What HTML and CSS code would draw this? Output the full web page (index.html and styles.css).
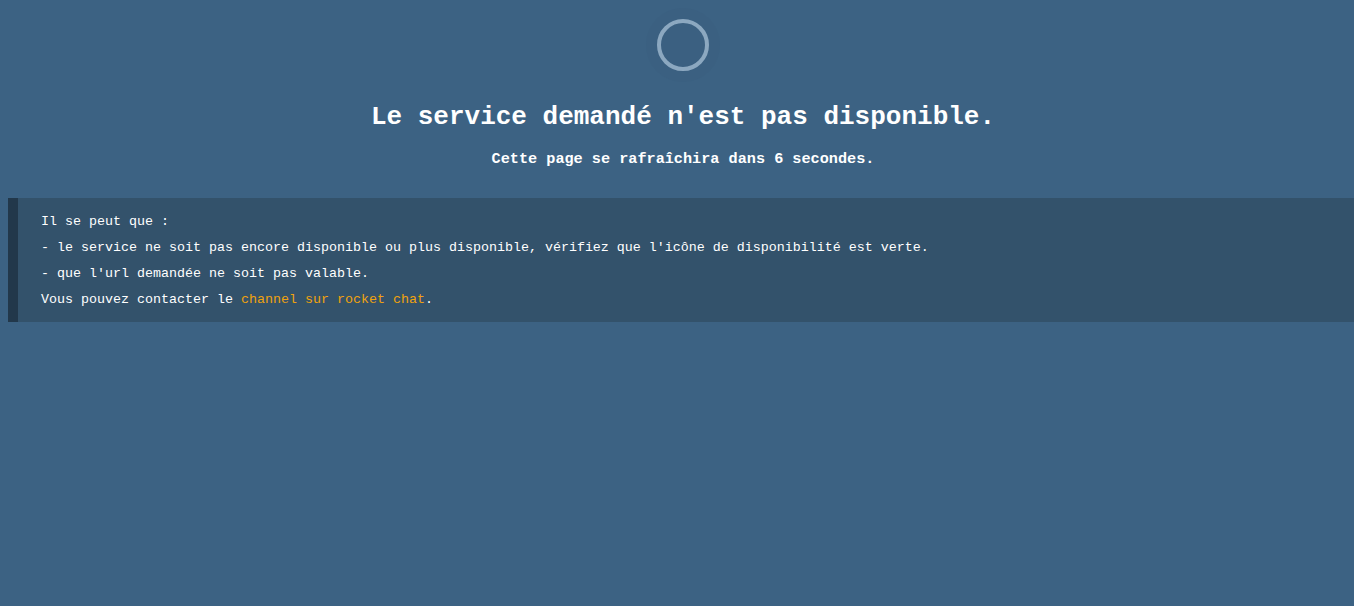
FILE: index.html
```html
<!DOCTYPE html>
<html lang="fr">
<head>
<meta charset="utf-8">
<title>Service indisponible</title>
<link rel="stylesheet" href="styles.css">
</head>
<body>
<header class="header">
  <div class="spinner-wrap"><div class="spinner"></div></div>
  <h1 class="title">Le service demandé n'est pas disponible.</h1>
  <p class="subtitle">Cette page se rafraîchira dans 6 secondes.</p>
</header>
<div class="info">
  <p class="line">Il se peut que :</p>
  <p class="line">- le service ne soit pas encore disponible ou plus disponible, vérifiez que l'icône de disponibilité est verte.</p>
  <p class="line">- que l'url demandée ne soit pas valable.</p>
  <p class="line">Vous pouvez contacter le <a class="link" href="#">channel sur rocket chat</a>.</p>
</div>
</body>
</html>
```
FILE: styles.css
```css
html, body {
  margin: 0;
  padding: 0;
  background: #3c6283;
  color: #ffffff;
  font-family: "Liberation Mono", "Courier New", monospace;
}
body {
  padding-top: 8px;
  overflow-x: hidden;
}
.header {
  padding-left: 12px;
}
.spinner-wrap {
  width: 74px;
  height: 74px;
  margin: 0 auto;
  border-radius: 50%;
  background: #3b6081;
  display: flex;
  align-items: center;
  justify-content: center;
}
.spinner {
  width: 44px;
  height: 44px;
  border: 4px solid #8ca8c0;
  border-radius: 50%;
}
.title {
  margin: 20px 0 0;
  font-size: 26px;
  line-height: 30px;
  font-weight: bold;
  text-align: center;
}
.subtitle {
  margin: 18px 0 0;
  font-size: 15.2px;
  line-height: 18px;
  font-weight: bold;
  text-align: center;
}
.info {
  margin: 30px 0 0 8px;
  background: #33526b;
  border-left: 10px solid #22384b;
  padding: 11px 23px 9px;
}
.line {
  margin: 0;
  font-size: 13.333px;
  line-height: 26px;
}
.link {
  color: #f0a20e;
  text-decoration: none;
}
```
